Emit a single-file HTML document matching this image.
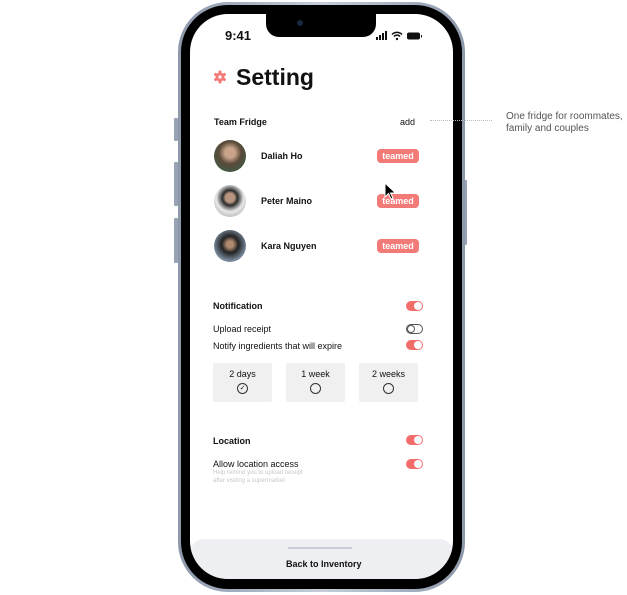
<!DOCTYPE html>
<html><head><style>
*{margin:0;padding:0;box-sizing:border-box}
body{width:627px;height:595px;background:#fff;position:relative;overflow:hidden;font-family:"Liberation Sans",sans-serif;color:#111}
.a{position:absolute}
.rim{left:178px;top:2px;width:287px;height:590px;border-radius:50px;background:linear-gradient(90deg,#8d99ab,#c5ceda 50%,#8d99ab)}
.blk{left:181px;top:5px;width:281px;height:584px;border-radius:47px;background:#000}
.scr{left:190px;top:14px;width:263px;height:565px;border-radius:38px;background:#fff;overflow:hidden}
.btn{background:#97a3b5;border-radius:1px}
.t{position:absolute;white-space:nowrap}
.b{font-weight:bold}
.badge{position:absolute;left:187px;width:42px;height:14px;border-radius:4px;background:#f27b78;color:#fff;font-size:9px;font-weight:bold;text-align:center;line-height:14px}
.av{position:absolute;left:24px;width:32px;height:32px;border-radius:50%}
.tg{position:absolute;left:216px;width:17px;height:10px;border-radius:5px;background:#f26d6a}
.tg::after{content:"";position:absolute;right:1px;top:1px;width:8px;height:8px;border-radius:50%;background:#fff}
.box{position:absolute;top:349px;width:59px;height:39px;background:#f0f0f0;border-radius:2px;font-size:9px;text-align:center;padding-top:6px}
.c{width:11px;height:11px;border:1px solid #333;border-radius:50%;margin:4px auto 0;font-size:7px;line-height:9px}
</style></head><body>
<div class="a btn" style="left:174px;top:118px;width:4px;height:23px"></div>
<div class="a btn" style="left:174px;top:162px;width:4px;height:44px"></div>
<div class="a btn" style="left:174px;top:218px;width:4px;height:45px"></div>
<div class="a btn" style="left:464px;top:180px;width:3px;height:65px"></div>
<div class="a rim"></div>
<div class="a blk"></div>
<div class="a scr">
 <div class="a" style="left:76px;top:0;width:110px;height:23px;background:#000;border-radius:0 0 13px 13px"></div>
 <div class="a" style="left:107px;top:6px;width:6px;height:6px;border-radius:50%;background:#1a2740"></div>
 <div class="t b" style="left:35px;top:14px;font-size:13px">9:41</div>
 <svg class="a" style="left:186px;top:17px" width="60" height="10"><rect x="0" y="6" width="2" height="3" fill="#111"/><rect x="3" y="4" width="2" height="5" fill="#111"/><rect x="6" y="2" width="2" height="7" fill="#111"/><rect x="9" y="0" width="2" height="9" fill="#111"/><path d="M16 3.5a7 7 0 0 1 10 0M18 5.5a4 4 0 0 1 6 0" stroke="#111" stroke-width="1.5" fill="none"/><circle cx="21" cy="8" r="1.2" fill="#111"/><rect x="31" y="1.5" width="13" height="7" rx="2" fill="#111"/><rect x="45" y="4" width="1" height="2.5" fill="#111"/></svg>
 <svg class="a" style="left:23px;top:56px" width="14" height="14" viewBox="0 0 14 14"><g fill="#f27b78"><circle cx="7" cy="7" r="4.5"/><g id="k"><rect x="5.5" y="0.5" width="3" height="13" rx="1"/></g><rect x="5.5" y="0.5" width="3" height="13" rx="1" transform="rotate(60 7 7)"/><rect x="5.5" y="0.5" width="3" height="13" rx="1" transform="rotate(120 7 7)"/></g><circle cx="7" cy="7" r="1.6" fill="#fff"/></svg>
 <div class="t b" style="left:46px;top:50px;font-size:23px">Setting</div>
 <div class="t b" style="left:24px;top:103px;font-size:9px">Team Fridge</div>
 <div class="t" style="left:210px;top:103px;font-size:9px">add</div>
 <div class="av" style="top:126px;background:radial-gradient(circle at 50% 40%,#c9a48a 20%,#5a4a3a 45%,#3f5a45 80%)"></div>
 <div class="t b" style="left:71px;top:137px;font-size:9px">Daliah Ho</div>
 <div class="badge" style="top:135px">teamed</div>
 <div class="av" style="top:171px;background:radial-gradient(circle at 50% 40%,#b89580 18%,#2a2a2a 30%,#e8e8e8 55%,#aaa 90%)"></div>
 <div class="t b" style="left:71px;top:182px;font-size:9px">Peter Maino</div>
 <div class="badge" style="top:180px">teamed</div>
 <div class="av" style="top:216px;background:radial-gradient(circle at 50% 45%,#b08a70 14%,#222 35%,#7c8da0 70%,#445 95%)"></div>
 <div class="t b" style="left:71px;top:227px;font-size:9px">Kara Nguyen</div>
 <div class="badge" style="top:225px">teamed</div>
 <div class="t b" style="left:23px;top:287px;font-size:9px">Notification</div>
 <div class="tg" style="top:287px"></div>
 <div class="t" style="left:23px;top:310px;font-size:9px">Upload receipt</div>
 <div class="a" style="left:216px;top:310px;width:17px;height:10px;border:1px solid #555;border-radius:5px"><div class="a" style="left:0;top:0;width:8px;height:8px;border:1px solid #555;border-radius:50%"></div></div>
 <div class="t" style="left:23px;top:327px;font-size:9px">Notify ingredients that will expire</div>
 <div class="tg" style="top:326px"></div>
 <div class="box" style="left:23px">2 days<div class="c">✓</div></div>
 <div class="box" style="left:96px">1 week<div class="c"></div></div>
 <div class="box" style="left:169px">2 weeks<div class="c"></div></div>
 <div class="t b" style="left:23px;top:422px;font-size:9px">Location</div>
 <div class="tg" style="top:421px"></div>
 <div class="t" style="left:23px;top:445px;font-size:9px">Allow location access</div>
 <div class="tg" style="top:445px"></div>
 <div class="t" style="left:23px;top:455px;font-size:6px;color:#c8c8c8;line-height:8px">Help remind you to upload receipt<br>after visiting a supermarket</div>
 <div class="a" style="left:0;top:525px;width:263px;height:45px;background:#eeeff3;border-radius:14px 14px 0 0"></div>
 <div class="a" style="left:98px;top:533px;width:64px;height:1.5px;background:#c9cbd8"></div>
 <div class="t b" style="left:96px;top:545px;font-size:9px">Back to Inventory</div>
</div>
<svg class="a" style="left:384px;top:182px" width="12" height="18"><path d="M1 1v14l3.5-3.5 2.5 5.5 2-1-2.5-5h5z" fill="#000" stroke="#fff" stroke-width="1"/></svg>
<div class="a" style="left:430px;top:120px;width:62px;border-top:1px dotted #bbb"></div>
<div class="t" style="left:506px;top:111px;font-size:10px;color:#555;line-height:12px">One fridge for roommates,<br>family and couples</div>
</body></html>
